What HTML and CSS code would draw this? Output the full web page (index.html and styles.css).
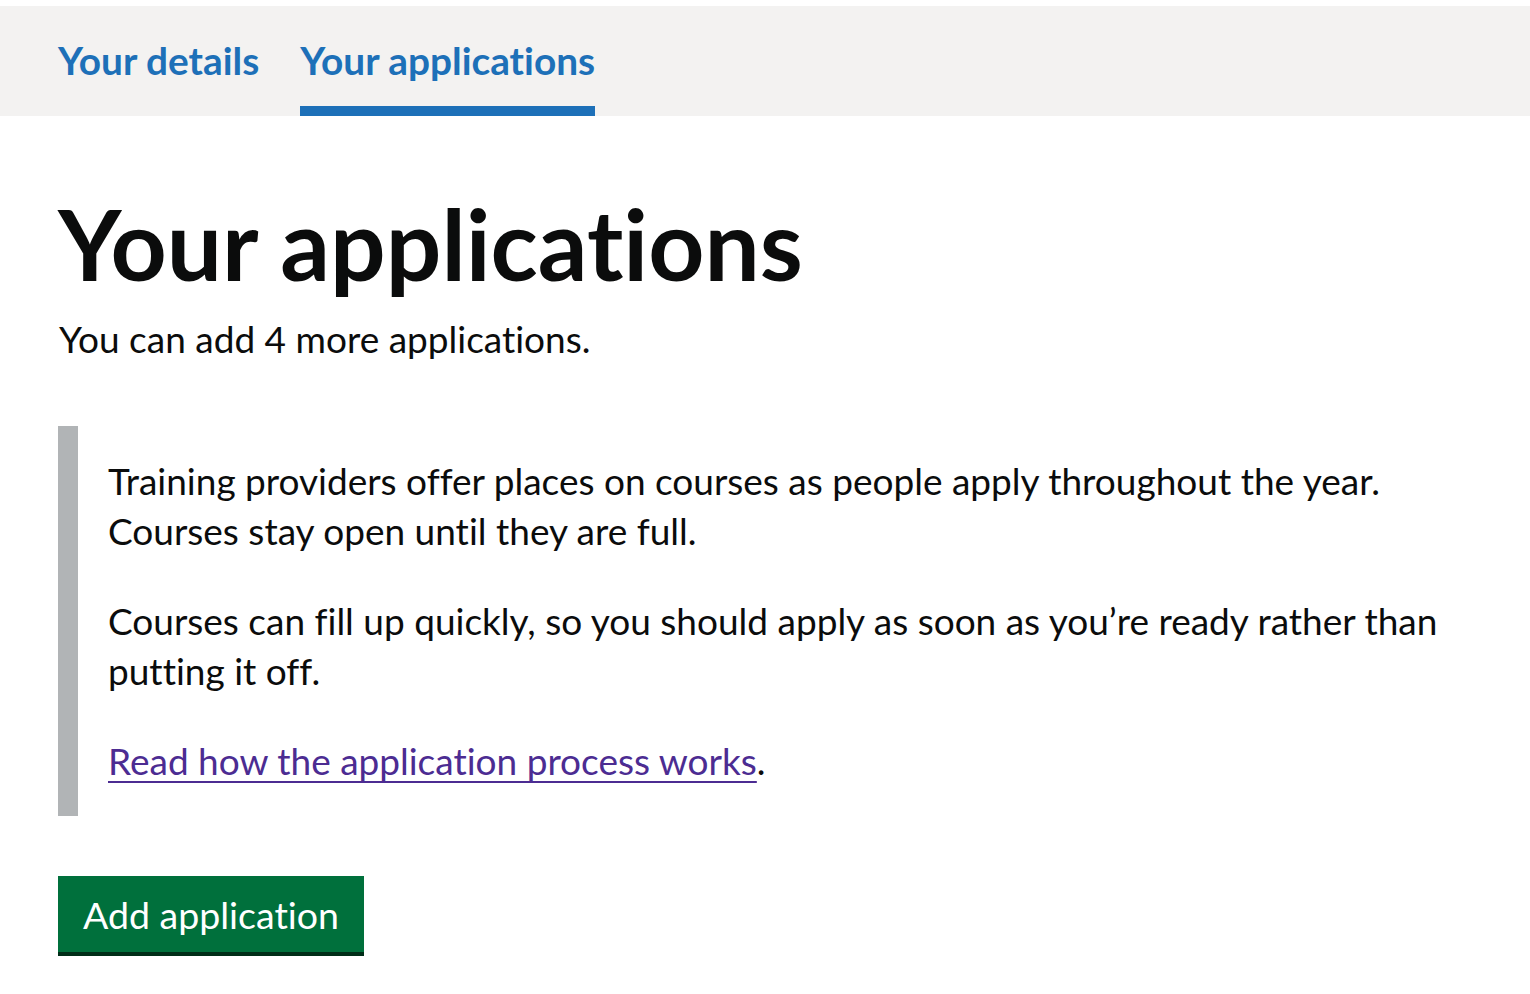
FILE: index.html
```html
<!DOCTYPE html>
<html lang="en">
<head>
<meta charset="utf-8">
<title>Your applications</title>
<link rel="stylesheet" href="styles.css">
</head>
<body>
<nav class="sub-nav">
  <ul class="sub-nav__list">
    <li class="sub-nav__item"><a class="sub-nav__link" href="#">Your details</a></li>
    <li class="sub-nav__item sub-nav__item--current"><a class="sub-nav__link" href="#" aria-current="page">Your applications</a></li>
  </ul>
</nav>
<main class="main">
  <h1 class="heading-xl">Your applications</h1>
  <p class="body lead-body">You can add 4 more applications.</p>
  <div class="inset">
    <p class="body">Training providers offer places on courses as people apply throughout the year. Courses stay open until they are full.</p>
    <p class="body">Courses can fill up quickly, so you should apply as soon as you’re ready rather than putting it off.</p>
    <p class="body"><a class="link" href="#">Read how the application process works</a>.</p>
  </div>
  <button class="button" type="button">Add application</button>
</main>
</body>
</html>
```
FILE: styles.css
```css
html, body {
  margin: 0;
  padding: 0;
  background: #ffffff;
}

body {
  padding-top: 6px;
  font-family: Lato, "Liberation Sans", sans-serif;
  font-variant-ligatures: none;
  color: #0b0c0c;
}

.sub-nav {
  background: #f3f2f1;
}

.sub-nav__list {
  list-style: none;
  margin: 0;
  padding: 0 0 0 58px;
  display: flex;
  gap: 41px;
}

.sub-nav__item {
  padding: 29px 0 21px;
  border-bottom: 10px solid transparent;
}

.sub-nav__item--current {
  border-bottom-color: #1d70b8;
}

.sub-nav__link {
  display: block;
  font-size: 38.8px;
  line-height: 50px;
  font-weight: 700;
  color: #1d70b8;
  text-decoration: none;
}

.main {
  padding: 77px 0 40px 58px;
}

.heading-xl {
  margin: 0 0 21px;
  font-size: 98px;
  line-height: 100px;
  font-weight: 700;
}

.body {
  margin: 0 0 40px;
  font-size: 37px;
  line-height: 50px;
  font-weight: 400;
}

.lead-body {
  padding-left: 1px;
  margin-bottom: 62px;
}

.inset {
  border-left: 20px solid #b1b4b6;
  padding: 30px 20px 30px 30px;
  margin-bottom: 60px;
}

.inset .body:last-child {
  margin-bottom: 0;
}

.link {
  color: #4c2c92;
  text-decoration: underline;
  text-decoration-thickness: 2px;
  text-underline-offset: 6px;
}

.button {
  display: inline-block;
  margin: 0;
  padding: 16px 21px 14px;
  border: 4px solid transparent;
  background: #00703c;
  box-shadow: 0 4px 0 #002d18;
  color: #ffffff;
  font-family: Lato, "Liberation Sans", sans-serif;
  font-variant-ligatures: none;
  font-size: 37.5px;
  line-height: 1;
  font-weight: 400;
  border-radius: 0;
  cursor: pointer;
}
```
